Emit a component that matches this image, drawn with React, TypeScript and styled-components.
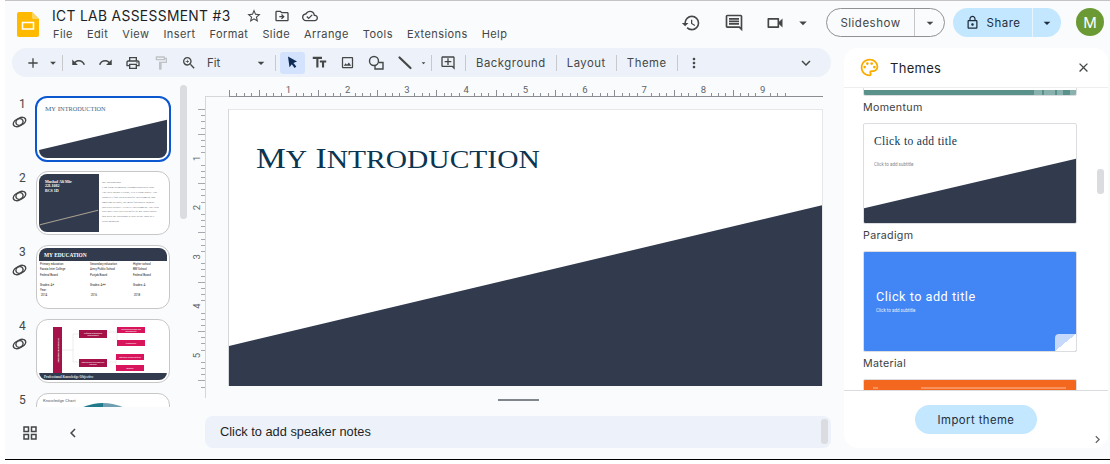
import React from 'react'
import styled, { createGlobalStyle } from 'styled-components'
import {
  MdAdd, MdArrowDropDown, MdChevronLeft, MdChevronRight, MdClose, MdExpandMore, MdHistory, MdMoreVert,
  MdOutlineAddComment, MdOutlineCloudDone, MdOutlineComment, MdOutlineDriveFileMove, MdOutlineFormatPaint,
  MdOutlineGridView, MdOutlineImage, MdOutlineLock, MdOutlinePalette, MdOutlinePrint, MdOutlineStarBorder,
  MdOutlineVideocam, MdRedo, MdTextFields, MdUndo, MdZoomIn,
} from 'react-icons/md'

const NAVY = '#323b4e'
const UI_FONT = 'Inter, Roboto, sans-serif'

const GlobalStyle = createGlobalStyle`
  html, body { margin: 0; padding: 0; background: #fff; }
  * { box-sizing: border-box; }
  body { font-family: ${UI_FONT}; color: #1f1f1f; overflow: hidden; }
`

const Window = styled.div`
  margin-left: 5px;
  height: 460px;
  width: 1105px;
  background: #f9fbfd;
  border-top: 1px solid #c6c3c6;
  border-bottom: 1px solid #000;
  display: flex;
  flex-direction: column;
`

/* ---- header ---- */
const Header = styled.header`
  height: 47px;
  flex: none;
  display: flex;
  padding: 6px 6px 0 12px;
`
const TitleBlock = styled.div`
  margin-left: 13px;
  display: flex;
  flex-direction: column;
`
const TitleRow = styled.div`
  display: flex;
  align-items: center;
  height: 17px;
  color: #444746;
`
const DocTitle = styled.span`
  font-size: 13.8px;
  letter-spacing: 0.35px;
  color: #1f1f1f;
  margin-right: 15px;
  white-space: nowrap;
`
const TitleIcon = styled.span`
  display: flex;
  margin-right: 12px;
  font-size: 16px;
`
const MenuBar = styled.nav`
  display: flex;
  gap: 14px;
  margin-top: 2px;
  padding-left: 1px;
  font-size: 11px;
  letter-spacing: 0.42px;
  line-height: 16px;
  color: #444746;
`
const HeaderRight = styled.div`
  margin: 1px 0 0 auto;
  display: flex;
  align-items: flex-start;
  color: #444746;
`
const HeaderIcon = styled.span<{ $w: number }>`
  width: ${p => p.$w}px;
  height: 29px;
  display: flex;
  align-items: center;
  justify-content: center;
  font-size: 20px;
`
const Pill = styled.div<{ $solid?: boolean }>`
  height: 29px;
  display: flex;
  align-items: center;
  border-radius: 15px;
  font-size: 11.5px;
  letter-spacing: 0.5px;
  background: ${p => (p.$solid ? '#c2e7ff' : 'transparent')};
  border: ${p => (p.$solid ? 'none' : '1px solid #8f9193')};
  color: ${p => (p.$solid ? '#1f2d3d' : '#444746')};
  margin-right: 8px;
`
const PillMain = styled.span<{ $w: number }>`
  width: ${p => p.$w}px;
  height: 100%;
  display: flex;
  align-items: center;
  justify-content: center;
  gap: 7px;
`
const PillDrop = styled.span<{ $w: number; $line: string }>`
  width: ${p => p.$w}px;
  height: 100%;
  display: flex;
  align-items: center;
  justify-content: center;
  border-left: 1px solid ${p => p.$line};
  font-size: 16px;
`
const Avatar = styled.div`
  width: 28px;
  height: 28px;
  margin: 0 0 0 7px;
  border-radius: 50%;
  background: #6b9a35;
  color: #fff;
  font-size: 15px;
  display: flex;
  align-items: center;
  justify-content: center;
`

/* ---- body columns ---- */
const Body = styled.div`
  flex: 1;
  min-height: 0;
  display: flex;
`
const MainColumn = styled.div`
  width: 839px;
  flex: none;
  display: flex;
  flex-direction: column;
`

/* ---- toolbar ---- */
const Toolbar = styled.div`
  height: 29px;
  flex: none;
  margin: 0 13px 0 7px;
  padding: 0 8px;
  border-radius: 15px;
  background: #edf2fa;
  display: flex;
  align-items: center;
  color: #444746;
`
const ToolButton = styled.span<{ $w?: number; $active?: boolean; $muted?: boolean }>`
  width: ${p => p.$w ?? 27}px;
  height: 22px;
  flex: none;
  display: flex;
  align-items: center;
  justify-content: center;
  border-radius: 3px;
  font-size: 16px;
  background: ${p => (p.$active ? '#d3e3fd' : 'transparent')};
  color: ${p => (p.$muted ? '#c0c3c6' : p.$active ? '#0b2a55' : '#444746')};
`
const ToolSep = styled.span<{ $gap?: number; $after?: number }>`
  width: 1px;
  height: 16px;
  flex: none;
  background: #c7c9cc;
  margin: 0 ${p => p.$after ?? p.$gap ?? 3}px 0 ${p => p.$gap ?? 3}px;
`
const ZoomSelect = styled.span`
  width: 68px;
  flex: none;
  display: flex;
  align-items: center;
  justify-content: space-between;
  padding-left: 4px;
  font-size: 11.5px;
  svg { font-size: 16px; margin-right: 2px; }
`
const ToolText = styled.span`
  font-size: 11.3px;
  letter-spacing: 0.55px;
  padding: 0 10px;
  white-space: nowrap;
`
const ToolEnd = styled.span`
  margin-left: auto;
  margin-right: 8px;
  display: flex;
  font-size: 18px;
`

/* ---- workspace ---- */
const Workspace = styled.div`
  flex: 1;
  min-height: 0;
  display: flex;
`
const Filmstrip = styled.aside`
  width: 185px;
  flex: none;
  position: relative;
  display: flex;
  flex-direction: column;
`
const ThumbList = styled.div`
  height: 330px;
  flex: none;
  overflow: hidden;
  padding-top: 20px;
  display: flex;
  flex-direction: column;
  gap: 10px;
`
const ThumbRow = styled.div`
  height: 64px;
  flex: none;
  display: flex;
`
const ThumbSide = styled.div`
  width: 31px;
  flex: none;
  padding: 0 0 0 7px;
  display: flex;
  flex-direction: column;
  align-items: flex-start;
`
const ThumbNumber = styled.span`
  margin-left: 7px;
  font-family: Roboto, sans-serif;
  font-size: 12px;
  line-height: 14px;
  color: #444746;
`
const ThumbFrame = styled.div<{ $active?: boolean }>`
  width: ${p => (p.$active ? 136 : 134)}px;
  height: ${p => (p.$active ? 66 : 64)}px;
  margin: ${p => (p.$active ? '-1px' : '0')};
  flex: none;
  padding: 2px;
  background: #fff;
  border: ${p => (p.$active ? '2px solid #0b57d0' : '1px solid #c7c7c7')};
  border-radius: 12px;
`
const MiniSlide = styled.div`
  position: relative;
  height: 100%;
  overflow: hidden;
  border-radius: 8px;
  background: #fff;
`
const Wedge = styled.div<{ $left: number; $right: number }>`
  position: absolute;
  inset: 0;
  background: ${NAVY};
  clip-path: polygon(0 ${p => p.$left}%, 100% ${p => p.$right}%, 100% 100%, 0 100%);
`
// title of the paradigm theme: caps with smaller caps, a bit wider than the plain face
const Caps = styled.span`
  font-size: 0.88em;
  text-transform: uppercase;
`
const MiniTitle = styled.div`
  padding: 5px 0 0 6px;
  font: 6.25px/8px 'Liberation Serif', serif;
  color: #3f6580;
  white-space: nowrap;
  transform: scaleX(1.145);
  transform-origin: 6px 0;
`
const BioSplit = styled.div`
  height: 100%;
  display: flex;
`
const BioPanel = styled.div`
  width: 60px;
  flex: none;
  position: relative;
  padding: 6px 0 0 6px;
  background: ${NAVY};
  color: #fff;
  font: bold 4px/4.4px 'Liberation Serif', serif;
`
const BioLine = styled.div`
  position: absolute;
  left: 0;
  right: 0;
  bottom: 14px;
  height: 1px;
  background: #a89f91;
  transform: rotate(-14deg);
`
const BioText = styled.div`
  padding: 6px 0 0 3px;
  font: 2.9px/4.9px 'Liberation Serif', serif;
  color: #6a6c70;
  white-space: nowrap;
  overflow: hidden;
`
const MiniBanner = styled.div`
  height: 13px;
  display: flex;
  align-items: center;
  padding-left: 5px;
  border-radius: 6px 6px 0 0;
  background: ${NAVY};
  color: #fff;
  font: bold 5.4px 'Liberation Serif', serif;
`
const EduGrid = styled.div`
  display: grid;
  grid-template-columns: 50px 43px 1fr;
  padding: 1px 0 0 1px;
  font: 2.9px/5.3px Roboto, sans-serif;
  color: #202124;
  white-space: nowrap;
`
const EduGap = styled.div`
  height: 5px;
`
const FlowBox = styled.div<{ $x: number; $y: number; $w: number; $h: number; $dark?: boolean }>`
  position: absolute;
  left: ${p => p.$x}px;
  top: ${p => p.$y}px;
  width: ${p => p.$w}px;
  height: ${p => p.$h}px;
  display: flex;
  align-items: center;
  justify-content: center;
  text-align: center;
  background: ${p => (p.$dark ? '#a5124a' : '#d8155c')};
  color: #fff;
  font: 1.9px/2.2px Roboto, sans-serif;
  overflow: hidden;
`
const FlowBar = styled(FlowBox)`
  writing-mode: vertical-rl;
  font-weight: 700;
  font-size: 2.4px;
`
const FlowLines = styled.svg`
  position: absolute;
  inset: 0;
  width: 100%;
  height: 100%;
`
const FlowFooter = styled.div`
  position: absolute;
  left: 0;
  right: 0;
  bottom: 0;
  height: 7px;
  display: flex;
  align-items: center;
  padding-left: 5px;
  background: ${NAVY};
  color: #dfe3ea;
  font: bold 3.4px 'Liberation Serif', serif;
`
const ChartLabel = styled.div`
  padding: 2px 0 0 4px;
  font: 4.3px Roboto, sans-serif;
  color: #5f6368;
`
const ChartDome = styled.div`
  position: absolute;
  left: 14px;
  top: 7px;
  width: 100px;
  height: 100px;
  border-radius: 50%;
  background: linear-gradient(90deg, #1f7a8c 50%, #6f9fb0 50%);
`
const StripScroll = styled.div`
  position: absolute;
  left: 175px;
  top: 8px;
  width: 7px;
  height: 134px;
  border-radius: 4px;
  background: #dadce0;
`
const StripFooter = styled.div`
  flex: 1;
  display: flex;
  align-items: center;
  padding: 0 0 0 16px;
  color: #444746;
  font-size: 18px;
  gap: 25px;
  margin-top: -1px;
`
const StripIcon = styled.span`
  display: flex;
`

const Stage = styled.main`
  flex: 1;
  min-width: 0;
  display: flex;
  flex-direction: column;
`
const HRuler = styled.svg`
  display: block;
  flex: none;
  width: 641px;
  height: 12px;
  margin: 8px 0 0 15px;
`
const CanvasRow = styled.div`
  height: 301px;
  flex: none;
  display: flex;
`
const VRuler = styled.svg`
  display: block;
  width: 16px;
  height: 301px;
  flex: none;
`
const Slide = styled.section`
  position: relative;
  width: 594px;
  height: 277px;
  margin: 12px 0 0 23px;
  background: #fff;
  overflow: hidden;
  border-top: 1px solid #e6e7e9;
  border-right: 1px solid #e6e7e9;
  box-shadow: -1px 0 0 #d5d7da;
`
const SlideTitle = styled.h1`
  position: relative;
  margin: 0;
  padding: 30px 0 0 27px;
  font: 400 29.3px/36px 'Liberation Serif', serif;
  color: #0b3550;
  white-space: nowrap;
  transform: scaleX(1.145);
  transform-origin: 27px 0;
`
const Handle = styled.div`
  width: 41px;
  height: 2px;
  flex: none;
  margin: 1px 0 0 308px;
  background: #80868b;
`
const Notes = styled.div`
  height: 32px;
  flex: none;
  margin: 15px 13px 0 15px;
  padding: 0 3px 1px 15px;
  border-radius: 8px;
  background: #edf2fa;
  display: flex;
  align-items: center;
  justify-content: space-between;
  font: 12.8px 'Liberation Sans', sans-serif;
  color: #1f1f1f;
`
const NotesScroll = styled.span`
  width: 7px;
  height: 25px;
  border-radius: 3px;
  background: #dadce0;
`

/* ---- themes panel ---- */
const SidePanel = styled.aside`
  position: relative;
  width: 264px;
  height: 400px;
  flex: none;
  background: #fff;
  border-radius: 14px;
  display: flex;
  flex-direction: column;
  overflow: hidden;
`
const PanelHeader = styled.div`
  height: 40px;
  flex: none;
  display: flex;
  align-items: center;
  padding: 0 17px 0 15px;
  border-bottom: 1px solid #eceef0;
`
const PaletteIcon = styled.span`
  display: flex;
  color: #f9ab00;
  font-size: 21px;
`
const PanelTitle = styled.span`
  margin-left: 10px;
  font-size: 13px;
  letter-spacing: 0.3px;
  color: #1f1f1f;
`
const PanelClose = styled.span`
  margin-left: auto;
  display: flex;
  font-size: 15px;
  color: #444746;
`
const ThemeList = styled.div`
  flex: 1;
  min-height: 0;
  overflow: hidden;
  padding-left: 19px;
`
const ThemeCard = styled.div<{ $offset?: number }>`
  width: 214px;
  height: 128px;
  margin-top: ${p => p.$offset ?? 0}px;
`
const ThemePreview = styled.div<{ $bg: string }>`
  position: relative;
  height: 101px;
  border: 1.5px solid #dcdde1;
  border-radius: 2px;
  overflow: hidden;
  background: ${p => p.$bg};
`
const ThemeName = styled.div`
  margin-top: 5px;
  font-size: 10.7px;
  line-height: 13px;
  letter-spacing: 0.3px;
  color: #3c4043;
`
const MomentumBar = styled.div`
  position: absolute;
  left: 0;
  right: 0;
  bottom: 0;
  height: 5px;
  background: linear-gradient(90deg, #5b918b 0 80%, #89b2ae 80% 84%, #5b918b 84% 85%, #89b2ae 85% 90%, #5b918b 90% 91%, #89b2ae 91% 94%, #5b918b 94% 97%, #89b2ae 97%);
`
const PreviewTitle = styled.div<{ $serif?: boolean; $color: string }>`
  position: relative;
  padding: ${p => (p.$serif ? '10px 0 0 10px' : '36px 0 0 12px')};
  font: ${p => (p.$serif ? "500 11.5px/15px 'Liberation Serif', serif" : '400 12.7px/17px Roboto, sans-serif')};
  letter-spacing: ${p => (p.$serif ? '0.35px' : '0.5px')};
  color: ${p => p.$color};
`
const PreviewSub = styled.div<{ $top: number; $left: number; $color: string }>`
  position: relative;
  padding: ${p => p.$top}px 0 0 ${p => p.$left}px;
  font: 4.5px/5px Roboto, sans-serif;
  color: ${p => p.$color};
`
const CornerFold = styled.div`
  position: absolute;
  right: 0;
  bottom: 0;
  width: 21px;
  height: 17px;
  border-top-left-radius: 4px;
  background: linear-gradient(to bottom right, #c6d9fb 50%, #fff 50%);
`
const OrangeBand = styled.div`
  position: relative;
  margin: 7px 10px 0 57px;
  height: 1.5px;
  background: #f9915c;
  &::before {
    content: '';
    position: absolute;
    left: -48px;
    width: 5px;
    height: 1.5px;
    background: #f9915c;
  }
`
const PanelFooter = styled.div`
  height: 58px;
  flex: none;
  padding-top: 14px;
  display: flex;
  justify-content: center;
  align-items: flex-start;
  border-top: 1px solid #dadce0;
`
const ImportButton = styled.div`
  width: 122px;
  height: 29px;
  border-radius: 15px;
  background: #c2e7ff;
  display: flex;
  align-items: center;
  justify-content: center;
  font-size: 11.3px;
  letter-spacing: 0.45px;
  color: #1f2d3d;
`
const PanelScroll = styled.div`
  position: absolute;
  left: 253px;
  top: 121px;
  width: 7px;
  height: 25px;
  border-radius: 3px;
  background: #dadce0;
`
const PanelExpand = styled.span`
  position: absolute;
  right: 3px;
  bottom: 1px;
  display: flex;
  font-size: 15px;
  color: #5f6368;
`

const MENU = ['File', 'Edit', 'View', 'Insert', 'Format', 'Slide', 'Arrange', 'Tools', 'Extensions', 'Help']
const BIO = [
  'My Background',
  'I am from Islamabad Hashmatabad near Iran.',
  'The area Mohal Colony, It is a calm whole. The',
  'chances I find with beautiful environment and',
  'amazing weather, the most fascinated Bunisti',
  'Interests science. Even IT environment. The road',
  'also have lots cool scientific so my usual about',
  'that how the buildings is also in the land as it',
  'looks mansion.',
]
const EDU = [
  'Primary education', 'Secondary education', 'Higher school',
  'Fazaia Inter College', 'Army Public School', 'BM School',
  'Federal Board', 'Punjab Board', 'Federal Board',
]

const LinkRings = () => (
  <svg width="15" height="12" viewBox="0 0 15 12" style={{ marginTop: 5 }}>
    <g fill="none" stroke="#444746" strokeWidth="1.5" transform="rotate(-28 7.5 6)">
      <ellipse cx="6" cy="6" rx="5.2" ry="3.5" />
      <ellipse cx="9" cy="6" rx="5.2" ry="3.5" />
    </g>
  </svg>
)

const Logo = () => (
  <svg width="22" height="25" viewBox="0 0 22 25" style={{ marginTop: 5, flex: 'none' }}>
    <path d="M2 0h13l7 7v16a2 2 0 0 1-2 2H2a2 2 0 0 1-2-2V2a2 2 0 0 1 2-2z" fill="#ffba00" />
    <path d="M15 0l7 7h-5.5a1.500 1.500 0 0 1-1.500-1.500z" fill="#ffd65c" />
    <rect x="5.5" y="10.5" width="11" height="6.5" fill="none" stroke="#fff" strokeWidth="1.5" />
  </svg>
)

const CursorIcon = () => (
  <svg width="15" height="15" viewBox="0 0 15 15">
    <path d="M3 1.5l9 5-3.6 1.4 2.9 3.6-1.7 1.4-2.8-3.7-2.3 3z" fill="#0b2a55" />
  </svg>
)
const ShapeIcon = () => (
  <svg width="17" height="16" viewBox="0 0 17 16" fill="none" stroke="#444746" strokeWidth="1.4">
    <circle cx="6" cy="6" r="4.5" />
    <path d="M11 7.5h4v6.5H7v-3" />
  </svg>
)
const LineIcon = () => (
  <svg width="16" height="16" viewBox="0 0 16 16" stroke="#444746" strokeWidth="2.2" strokeLinecap="round">
    <path d="M2.5 2.5l11 10.5" />
  </svg>
)

const HorizontalRuler = () => {
  // ruler origin sits 24px into the bar, an inch is 59.3px
  const ticks = Array.from({ length: 76 }, (_, i) => i)
  return (
    <HRuler viewBox="0 0 641 12">
      <line x1="0" x2="24" y1="11.5" y2="11.5" stroke="#d5d7da" />
      <line x1="24" x2="618" y1="11.5" y2="11.5" stroke="#8a8d91" />
      {ticks.map(i => {
        const x = Math.round(24 + i * 7.41) + 0.5
        if (x > 618) return null
        if (i % 8 === 0 && i > 0) return null
        const h = i % 4 === 0 ? 6 : 3
        return <line key={i} x1={x} x2={x} y1={11 - h} y2={11} stroke="#8a8d91" />
      })}
      {[1, 2, 3, 4, 5, 6, 7, 8, 9].map(n => (
        <text key={n} x={24 + n * 59.3} y={8} fontSize="9.5" fontFamily="Roboto, sans-serif" textAnchor="middle" fill="#5f6368">{n}</text>
      ))}
    </HRuler>
  )
}

const VerticalRuler = () => {
  const ticks = Array.from({ length: 46 }, (_, i) => i)
  return (
    <VRuler viewBox="0 0 16 301">
      <line x1="15.5" x2="15.5" y1="0" y2="301" stroke="#d5d7da" />
      {ticks.map(i => {
        const y = Math.round(12 + i * 6.17) + 0.5
        if (i % 8 === 0 && i > 0) return null
        const w = i % 4 === 0 ? 7 : 4
        return <line key={i} x1={15 - w} x2={15} y1={y} y2={y} stroke="#a6a9ad" />
      })}
      {[1, 2, 3, 4, 5].map(n => {
        const y = 12 + n * 49.3
        return (
          <text key={n} x={7} y={y + 3} fontSize="9.5" fontFamily="Roboto, sans-serif" textAnchor="middle" fill="#5f6368" transform={`rotate(-90 7 ${y})`}>{n}</text>
        )
      })}
    </VRuler>
  )
}

const Thumbs = () => (
  <ThumbList>
    <ThumbRow>
      <ThumbSide><ThumbNumber>1</ThumbNumber><LinkRings /></ThumbSide>
      <ThumbFrame $active>
        <MiniSlide>
          <Wedge $left={86} $right={34} />
          <MiniTitle>M<Caps>y</Caps> I<Caps>ntroduction</Caps></MiniTitle>
        </MiniSlide>
      </ThumbFrame>
    </ThumbRow>
    <ThumbRow>
      <ThumbSide><ThumbNumber>2</ThumbNumber><LinkRings /></ThumbSide>
      <ThumbFrame>
        <MiniSlide>
          <BioSplit>
            <BioPanel>
              Mushaf Ali Mir<br />22l-1082<br />BCS 1D
              <BioLine />
            </BioPanel>
            <BioText>{BIO.map(line => <div key={line}>{line}</div>)}</BioText>
          </BioSplit>
        </MiniSlide>
      </ThumbFrame>
    </ThumbRow>
    <ThumbRow>
      <ThumbSide><ThumbNumber>3</ThumbNumber><LinkRings /></ThumbSide>
      <ThumbFrame>
        <MiniSlide>
          <MiniBanner>MY EDUCATION</MiniBanner>
          <EduGrid>
            {EDU.map((cell, i) => <span key={i}>{cell}</span>)}
            <EduGap /><EduGap /><EduGap />
            <span>Grades: A+</span><span>Grades: A++</span><span>Grades: A</span>
            <span>Year:</span><span /><span />
            <span>&nbsp;2014</span><span>&nbsp;2016</span><span>&nbsp;2018</span>
          </EduGrid>
        </MiniSlide>
      </ThumbFrame>
    </ThumbRow>
    <ThumbRow>
      <ThumbSide><ThumbNumber>4</ThumbNumber><LinkRings /></ThumbSide>
      <ThumbFrame>
        <MiniSlide>
          <FlowLines viewBox="0 0 128 58">
            <path d="M23 28H34M34 12V40M34 12H40M34 40H40M68 10H78M78 6V18M68 40H77M77 34V46" fill="none" stroke="#e3d5da" strokeWidth="0.5" />
          </FlowLines>
          <FlowBar $x={14} $y={5} $w={9} $h={46} $dark>Professional Roadmap</FlowBar>
          <FlowBox $x={40} $y={8} $w={28} $h={8} $dark>Software Engineering Development</FlowBox>
          <FlowBox $x={40} $y={37} $w={28} $h={8} $dark>Data Science and Machine Learning</FlowBox>
          <FlowBox $x={78} $y={5} $w={28} $h={6}>Front end and back end development</FlowBox>
          <FlowBox $x={78} $y={18} $w={28} $h={6}>Frameworks</FlowBox>
          <FlowBox $x={77} $y={32} $w={28} $h={6}>Statistical modelling tools</FlowBox>
          <FlowBox $x={77} $y={43} $w={28} $h={6}>Analysis</FlowBox>
          <FlowFooter>Professional Knowledge Objective</FlowFooter>
        </MiniSlide>
      </ThumbFrame>
    </ThumbRow>
    <ThumbRow>
      <ThumbSide><ThumbNumber>5</ThumbNumber></ThumbSide>
      <ThumbFrame>
        <MiniSlide>
          <ChartDome />
          <ChartLabel>Knowledge Chart</ChartLabel>
        </MiniSlide>
      </ThumbFrame>
    </ThumbRow>
  </ThumbList>
)

export default function App() {
  return (
    <>
      <GlobalStyle />
      <Window>
        <Header>
          <Logo />
          <TitleBlock>
            <TitleRow>
              <DocTitle>ICT LAB ASSESSMENT #3</DocTitle>
              <TitleIcon><MdOutlineStarBorder /></TitleIcon>
              <TitleIcon><MdOutlineDriveFileMove /></TitleIcon>
              <TitleIcon><MdOutlineCloudDone /></TitleIcon>
            </TitleRow>
            <MenuBar>{MENU.map(item => <span key={item}>{item}</span>)}</MenuBar>
          </TitleBlock>
          <HeaderRight>
            <HeaderIcon $w={42}><MdHistory /></HeaderIcon>
            <HeaderIcon $w={44}><MdOutlineComment /></HeaderIcon>
            <HeaderIcon $w={38}><MdOutlineVideocam /></HeaderIcon>
            <HeaderIcon $w={18}><MdArrowDropDown /></HeaderIcon>
            <HeaderIcon $w={14} />
            <Pill>
              <PillMain $w={87}>Slideshow</PillMain>
              <PillDrop $w={30} $line="#c4c6c8"><MdArrowDropDown /></PillDrop>
            </Pill>
            <Pill $solid>
              <PillMain $w={79}><MdOutlineLock size={15} />Share</PillMain>
              <PillDrop $w={29} $line="#e8f4ff"><MdArrowDropDown /></PillDrop>
            </Pill>
            <Avatar>M</Avatar>
          </HeaderRight>
        </Header>
        <Body>
          <MainColumn>
            <Toolbar>
              <ToolButton $w={26}><MdAdd /></ToolButton>
              <ToolButton $w={14}><MdArrowDropDown /></ToolButton>
              <ToolSep $gap={2} />
              <ToolButton $w={27}><MdUndo size={15} /></ToolButton>
              <ToolButton $w={27}><MdRedo size={15} /></ToolButton>
              <ToolButton $w={28}><MdOutlinePrint /></ToolButton>
              <ToolButton $w={27} $muted><MdOutlineFormatPaint /></ToolButton>
              <ToolButton $w={29}><MdZoomIn /></ToolButton>
              <ZoomSelect>Fit<MdArrowDropDown /></ZoomSelect>
              <ToolSep $gap={4} />
              <ToolButton $w={25} $active><CursorIcon /></ToolButton>
              <ToolButton $w={28}><MdTextFields size={17} /></ToolButton>
              <ToolButton $w={29}><MdOutlineImage size={15} /></ToolButton>
              <ToolButton $w={29}><ShapeIcon /></ToolButton>
              <ToolButton $w={28}><LineIcon /></ToolButton>
              <ToolButton $w={9}><MdArrowDropDown /></ToolButton>
              <ToolSep $gap={3} />
              <ToolButton $w={26}><MdOutlineAddComment /></ToolButton>
              <ToolSep $gap={4} $after={0} />
              <ToolText>Background</ToolText>
              <ToolSep $gap={0} />
              <ToolText>Layout</ToolText>
              <ToolSep $gap={0} />
              <ToolText>Theme</ToolText>
              <ToolSep $gap={0} />
              <ToolButton $w={32}><MdMoreVert /></ToolButton>
              <ToolEnd><MdExpandMore /></ToolEnd>
            </Toolbar>
            <Workspace>
              <Filmstrip>
                <Thumbs />
                <StripScroll />
                <StripFooter>
                  <StripIcon><MdOutlineGridView /></StripIcon>
                  <StripIcon><MdChevronLeft /></StripIcon>
                </StripFooter>
              </Filmstrip>
              <Stage>
                <HorizontalRuler />
                <CanvasRow>
                  <VerticalRuler />
                  <Slide>
                    <Wedge $left={85.5} $right={34.5} />
                    <SlideTitle>M<Caps>y</Caps> I<Caps>ntroduction</Caps></SlideTitle>
                  </Slide>
                </CanvasRow>
                <Handle />
                <Notes>
                  Click to add speaker notes
                  <NotesScroll />
                </Notes>
              </Stage>
            </Workspace>
          </MainColumn>
          <SidePanel>
            <PanelHeader>
              <PaletteIcon><MdOutlinePalette /></PaletteIcon>
              <PanelTitle>Themes</PanelTitle>
              <PanelClose><MdClose /></PanelClose>
            </PanelHeader>
            <ThemeList>
              <ThemeCard $offset={-93}>
                <ThemePreview $bg="#fff"><MomentumBar /></ThemePreview>
                <ThemeName>Momentum</ThemeName>
              </ThemeCard>
              <ThemeCard>
                <ThemePreview $bg="#fff">
                  <Wedge $left={85} $right={35} />
                  <PreviewTitle $serif $color="#0b3550">Click to add title</PreviewTitle>
                  <PreviewSub $top={13} $left={10} $color="#80868b">Click to add subtitle</PreviewSub>
                </ThemePreview>
                <ThemeName>Paradigm</ThemeName>
              </ThemeCard>
              <ThemeCard>
                <ThemePreview $bg="#4285f4">
                  <PreviewTitle $color="#fff">Click to add title</PreviewTitle>
                  <PreviewSub $top={3} $left={12} $color="#e8f0fe">Click to add subtitle</PreviewSub>
                  <CornerFold />
                </ThemePreview>
                <ThemeName>Material</ThemeName>
              </ThemeCard>
              <ThemeCard>
                <ThemePreview $bg="#f4671f"><OrangeBand /></ThemePreview>
              </ThemeCard>
            </ThemeList>
            <PanelFooter><ImportButton>Import theme</ImportButton></PanelFooter>
            <PanelScroll />
            <PanelExpand><MdChevronRight /></PanelExpand>
          </SidePanel>
        </Body>
      </Window>
    </>
  )
}
